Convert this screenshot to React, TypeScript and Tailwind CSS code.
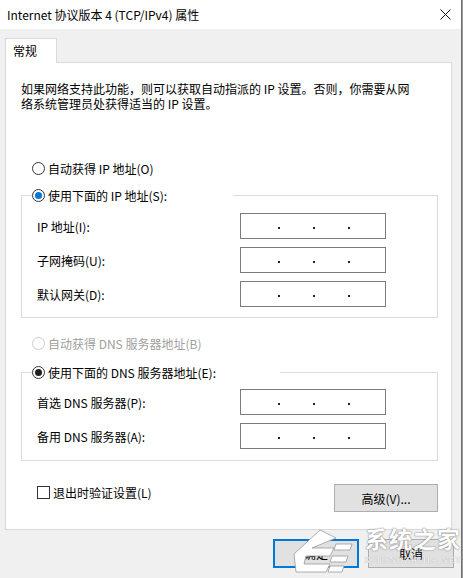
import React from "react";

function Radio({ checked = false, disabled = false, blue = false }: { checked?: boolean; disabled?: boolean; blue?: boolean }) {
  return (
    <span
      className={
        disabled
          ? "w-[13px] h-[13px] shrink-0 rounded-full border border-[#cccccc] bg-white flex items-center justify-center"
          : "w-[13px] h-[13px] shrink-0 rounded-full border border-[#333333] bg-white flex items-center justify-center"
      }
    >
      {checked && (
        <span className={blue ? "w-[7px] h-[7px] rounded-full bg-[#0078d7]" : "w-[7px] h-[7px] rounded-full bg-[#1f1f1f]"} />
      )}
    </span>
  );
}

function IpBox() {
  return (
    <div className="w-[146px] h-[26px] border border-[#7a7a7a] bg-white flex items-center pl-[37px] gap-[33px] pt-[3px]">
      <span className="w-[2px] h-[2px] bg-[#222]" />
      <span className="w-[2px] h-[2px] bg-[#222]" />
      <span className="w-[2px] h-[2px] bg-[#222]" />
    </div>
  );
}

function Row({ label }: { label: string }) {
  return (
    <div className="flex items-center h-[26px] pl-[15px]">
      <span className="w-[203px] leading-[15px]">{label}</span>
      <IpBox />
    </div>
  );
}

export default function App() {
  return (
    <div className="w-[463px] h-[578px] flex font-['Noto_Sans_CJK_SC','Noto_Sans',sans-serif] text-[12px] text-black relative overflow-hidden">
      <div className="w-[461px] h-full flex flex-col bg-[#f0f0f0]">
        {/* title bar */}
        <div className="h-[29px] bg-white flex items-center justify-between pl-[7px] pr-[10px]">
          <span className="leading-[15px]">Internet 协议版本 4 (TCP/IPv4) 属性</span>
          <svg width="11" height="11" viewBox="0 0 11 11">
            <path d="M0.5 0.5 L10.5 10.5 M10.5 0.5 L0.5 10.5" stroke="#111" strokeWidth="1" fill="none" />
          </svg>
        </div>

        {/* body */}
        <div className="flex-1 px-[5px] pt-[9px] flex flex-col">
          <div className="w-[52px] h-[25px] border border-b-0 border-[#d9d9d9] bg-white relative z-10 -mb-px pl-[7px] pt-[4px] leading-[15px]">
            常规
          </div>
          <div className="w-[447px] h-[468px] border border-[#d9d9d9] bg-white flex flex-col">
            <p className="mt-[18px] ml-[15px] leading-[15px]">
              如果网络支持此功能，则可以获取自动指派的 IP 设置。否则，你需要从网
              <br />
              络系统管理员处获得适当的 IP 设置。
            </p>

            <div className="mt-[50px] ml-[26px] flex items-center gap-[3px] h-[15px]">
              <Radio />
              <span className="leading-[15px]">自动获得 IP 地址(O)</span>
            </div>

            <fieldset className="mt-[12px] ml-[15px] w-[417px] border border-[#dcdcdc] px-0 pt-[10px] pb-[10px] flex flex-col gap-[8px]">
              <legend className="ml-[10px] w-[201px] h-[15px] flex items-center gap-[3px] p-0">
                <Radio checked blue />
                <span className="leading-[15px]">使用下面的 IP 地址(S):</span>
              </legend>
              <Row label="IP 地址(I):" />
              <Row label="子网掩码(U):" />
              <Row label="默认网关(D):" />
            </fieldset>

            <div className="mt-[18px] ml-[26px] flex items-center gap-[3px] h-[15px] text-[#a0a0a0]">
              <Radio disabled />
              <span className="leading-[15px]">自动获得 DNS 服务器地址(B)</span>
            </div>

            <fieldset className="mt-[14px] ml-[15px] w-[417px] border border-[#dcdcdc] px-0 pt-[9px] pb-[11px] flex flex-col gap-[8px]">
              <legend className="ml-[10px] w-[248px] h-[15px] flex items-center gap-[3px] p-0">
                <Radio checked />
                <span className="leading-[15px]">使用下面的 DNS 服务器地址(E):</span>
              </legend>
              <Row label="首选 DNS 服务器(P):" />
              <Row label="备用 DNS 服务器(A):" />
            </fieldset>

            <div className="mt-[23px] ml-[15px] w-[417px] flex justify-between items-start">
              <div className="pl-[16px] pt-[1px] flex items-center gap-[3px] h-[16px]">
                <span className="w-[13px] h-[13px] border border-[#333333] bg-white shrink-0" />
                <span className="leading-[15px]">退出时验证设置(L)</span>
              </div>
              <button className="w-[104px] h-[28px] border border-[#adadad] bg-[#e1e1e1] flex items-center justify-center leading-[15px]">
                高级(V)...
              </button>
            </div>
          </div>

          <div className="mt-[9px] ml-[268px] flex gap-[9px]">
            <button className="w-[86px] h-[29px] border-2 border-[#0078d7] bg-[#e1e1e1] flex items-center justify-center leading-[15px]">
              确定
            </button>
            <button className="w-[86px] h-[29px] border border-[#adadad] bg-[#e1e1e1] flex items-center justify-center leading-[15px]">
              取消
            </button>
          </div>
        </div>
      </div>
      <div className="w-px h-full bg-[#6e6e6e]" />
      <div className="w-px h-full bg-[#9a9a9a]" />

      {/* watermark */}
      <div className="absolute left-[290px] top-[524px] flex items-start gap-[4px] pointer-events-none">
        <svg width="70" height="50" viewBox="0 0 70 50">
          <g fill="#ffffff" stroke="#9a9a9a" strokeWidth="0.8">
            <path d="M4 30 L30 6 L46 14 L22 24 L44 24 L40 32 L16 32 L14 40 L40 40 L36 48 L6 48 Z" />
            <path d="M46 20 L62 20 L60 26 L44 26 Z" />
            <path d="M42 32 L58 32 L56 38 L40 38 Z" />
            <path d="M40 42 L54 42 L52 48 L38 48 Z" />
          </g>
        </svg>
        <div className="flex flex-col items-center">
          <span className="text-[23px] leading-[28px] font-bold text-white [text-shadow:0_0_1px_#777,0_0_2px_#999] tracking-[1px]">系统之家</span>
          <span className="text-[9px] leading-[10px] text-white font-['Liberation_Serif',serif] [text-shadow:0_0_1px_#888] tracking-[1px] mt-[3px]">XITONGZHIJIA.NET</span>
        </div>
      </div>
    </div>
  );
}
